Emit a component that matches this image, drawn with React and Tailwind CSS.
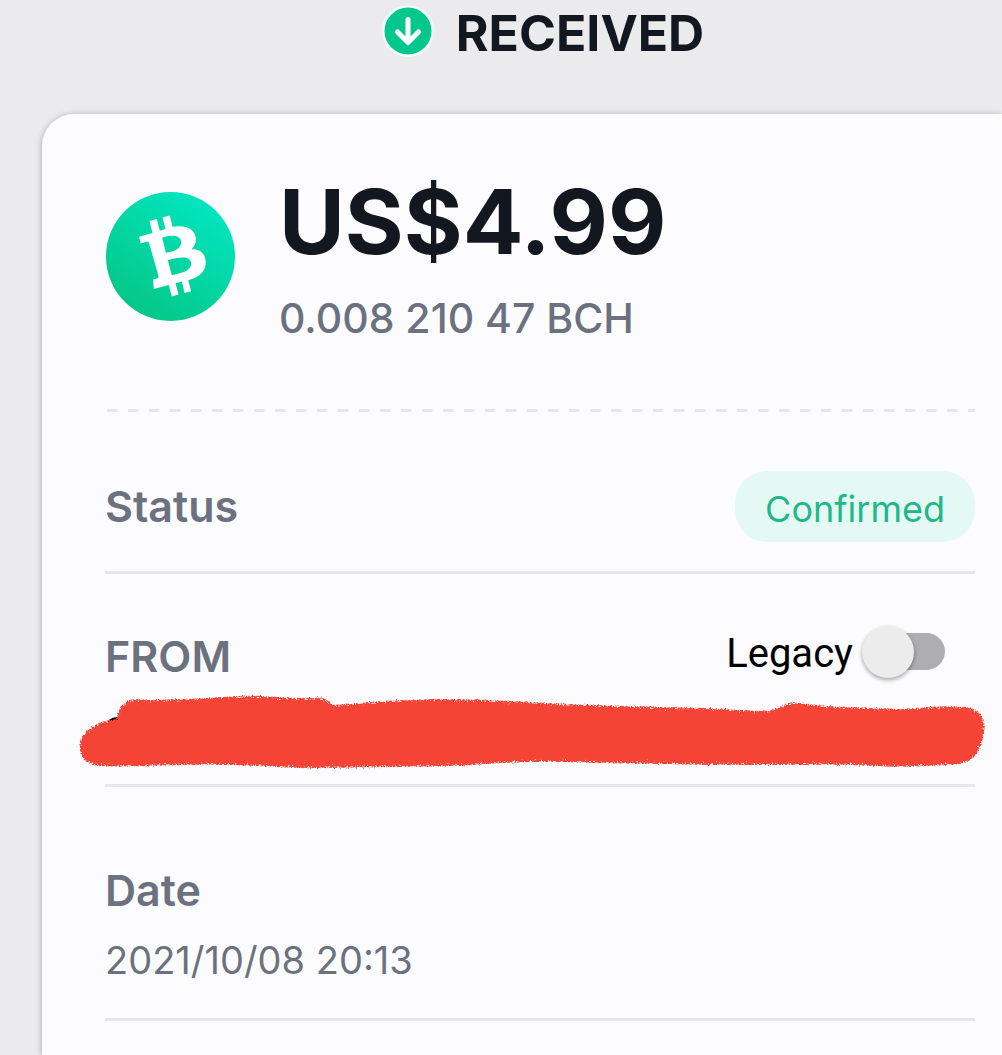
import { useState } from 'react'

function ReceivedIcon() {
  return (
    <svg viewBox="0 0 52 52" className="h-13 w-13 shrink-0" aria-hidden="true">
      <circle cx="26" cy="26" r="26" fill="#f0fffa" />
      <circle cx="26" cy="26" r="23.5" fill="#04c78e" />
      <path d="M26 14.500V36M15.500 27 26 37.500 36.500 27" fill="none" stroke="#fff" strokeWidth="5" strokeLinecap="round" strokeLinejoin="round" />
    </svg>
  )
}

function BchLogo() {
  return (
    <svg viewBox="0 0 386 386" className="h-[129px] w-[129px] shrink-0" role="img" aria-label="Bitcoin Cash">
      <defs>
        <linearGradient id="bch" x1="0.2" y1="0.95" x2="0.8" y2="0.05">
          <stop offset="0" stopColor="#04c684" />
          <stop offset="1" stopColor="#02e6c2" />
        </linearGradient>
      </defs>
      <circle cx="193" cy="193" r="193" fill="url(#bch)" />
      <path
        fill="#fff"
        fillRule="evenodd"
        d="M99 134 139 123 130 87 152 81 161 116 178 111 169 76 191 70 199 104C238 98 262 108 268 134 271 149 266 161 256 171 281 170 295 182 298 205 301 236 281 254 246 264L255 297 235 302 227 268 208 273 217 307 197 313 188 278 143 290 141 262 153 259Q158 256 157 251L129 153Q127 148 121 149L104 154ZM168 136 179 182C205 178 225 169 225 150 224 129 198 127 168 136ZM185 204 197 249C232 242 256 234 255 213 252 191 222 193 185 204Z"
      />
    </svg>
  )
}

// Marker stroke that hides the address, grainy towards its edges
function Redaction() {
  return (
    <svg
      viewBox="0 0 920 88"
      preserveAspectRatio="none"
      className="mt-3 mb-1.5 -ml-[33px] block h-[88px] w-[calc(100%+50px)]"
      role="img"
      aria-label="Address hidden"
    >
      <defs>
        <filter id="marker" x="0" y="0" width="920" height="88" filterUnits="userSpaceOnUse" colorInterpolationFilters="sRGB">
          <feTurbulence type="fractalNoise" baseFrequency="0.55" numOctaves="2" seed="4" result="noise" />
          <feDisplacementMap in="SourceGraphic" in2="noise" scale="3" xChannelSelector="R" yChannelSelector="G" result="rough" />
          <feColorMatrix in="noise" type="matrix" values="0 0 0 0 0  0 0 0 0 0  0 0 0 0 0  0 0 1 0 0" result="grain" />
          <feGaussianBlur in="SourceAlpha" stdDeviation="5" result="soft" />
          <feComposite in="soft" in2="grain" operator="arithmetic" k2="1.2" k3="1" k4="-1" result="sum" />
          <feComponentTransfer in="sum" result="mask">
            <feFuncA type="linear" slope="5" intercept="0" />
          </feComponentTransfer>
          <feComposite in="rough" in2="mask" operator="in" />
        </filter>
      </defs>
      <path d="M36 31Q40 27 46 27L50 34H36Z" fill="#000" />
      <path
        filter="url(#marker)"
        fill="#f54336"
        d="M7 56C7 45 16 37 32 31L45 29C45 18 52 9 62 9 90 11 125 8 170 6 200 5 220 10 248 7 256 9 258 12 261 15 300 11 340 9 375 9 420 9 450 12 520 15L640 18C670 20 690 22 702 19 712 18 712 12 721 12 733 13 742 15 755 16L830 19C850 17 880 15 897 17 913 21 915 34 911 48 907 68 900 73 880 75L830 77C800 77 780 74 740 75L640 75 520 73C470 71 430 72 390 76L260 78C220 79 200 76 150 75 110 74 70 78 24 76 14 74 7 67 7 56Z"
      />
    </svg>
  )
}

function Divider() {
  return <hr className="border-t-3 border-[#e5e6ee]" />
}

export default function App() {
  const [legacy, setLegacy] = useState(false)

  return (
    <div className="flex min-h-screen flex-col overflow-x-hidden bg-[#ebebed] font-['Inter',sans-serif] text-[#6b717f]">
      <header className="flex h-[114px] items-start justify-center gap-[22px] pt-[5px] pl-[84px]">
        <ReceivedIcon />
        <h1 className="text-[50px] leading-[56px] font-bold text-[#131820]">RECEIVED</h1>
      </header>

      <main className="ml-[42px] flex-1 rounded-tl-[32px] bg-[#fcfcfe] pt-[67px] pr-[27px] pl-[63px] shadow-[0_1px_6px_rgba(0,0,0,0.3)]">
        <section className="flex gap-11">
          <div className="pt-[11px] pl-px">
            <BchLogo />
          </div>
          <div className="whitespace-nowrap">
            <p className="text-[90px] leading-[82px] font-bold text-[#131820]">US$4.99</p>
            <p className="mt-[35px] text-[41px] leading-[40px] font-medium">0.008 210 47 BCH</p>
          </div>
        </section>

        <svg className="mt-[71px] block h-[3px] w-full" aria-hidden="true">
          <line x1="2" y1="1.500" x2="100%" y2="1.500" stroke="#e5e6ee" strokeWidth="3" strokeDasharray="10.500 10.500" />
        </svg>

        <section className="mt-[59px] mb-[29px] flex h-[71px] items-center justify-between">
          <h2 className="text-[43px] leading-[43px] font-semibold">Status</h2>
          <span className="flex h-full items-center rounded-[32px] bg-[#e5f9f4] px-[30px] pt-1 text-[36px] text-[#1fb888]">Confirmed</span>
        </section>
        <Divider />

        <section className="pt-[52px]">
          <div className="flex h-[52px] items-center justify-between pr-[30px]">
            <h2 className="pt-2 text-[43px] leading-[43px] font-semibold">FROM</h2>
            <label className="flex items-center gap-[9px] font-['Roboto',sans-serif] text-[40px] leading-[48px] text-black">
              <span className="pt-1">Legacy</span>
              <input
                type="checkbox"
                role="switch"
                checked={legacy}
                onChange={(e) => setLegacy(e.target.checked)}
                className="relative h-[52px] w-[83px] appearance-none before:absolute before:top-[7px] before:right-0 before:h-[37px] before:w-[74px] before:rounded-full before:bg-[#aeaeb0] after:absolute after:top-0 after:left-0 after:h-[52px] after:w-[52px] after:rounded-full after:bg-[#ececec] after:shadow-[0_2px_4px_rgba(0,0,0,0.35)] checked:after:left-[31px]"
              />
            </label>
          </div>
          <Redaction />
        </section>
        <Divider />

        <section className="pt-[82px] pb-9">
          <h2 className="text-[43px] leading-[43px] font-semibold">Date</h2>
          <p className="mt-[26px] text-[38px] leading-[44px]">2021/10/08 20:13</p>
        </section>
        <Divider />
      </main>
    </div>
  )
}
